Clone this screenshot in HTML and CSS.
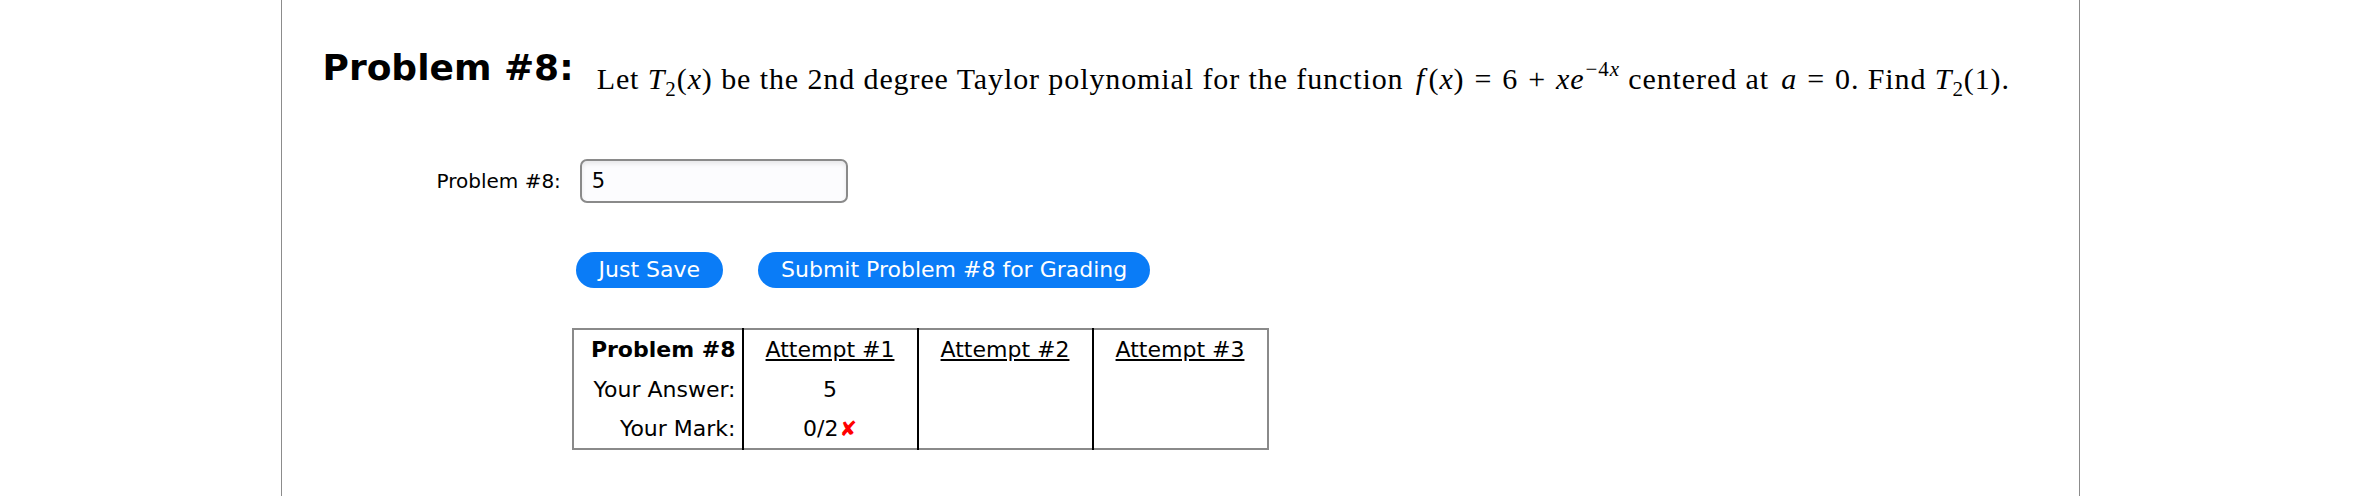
FILE: index.html
```html
<!DOCTYPE html>
<html lang="en">
<head>
<meta charset="utf-8">
<title>Problem #8</title>
<link rel="stylesheet" href="styles.css">
</head>
<body>
<div class="page">
  <div class="question">
    <span class="qnum">Problem #8:</span>
    <span class="math">Let <i>T</i><sub>2</sub>(<i>x</i>) be the 2nd degree Taylor polynomial for the function <span class="expr"><i>f</i>&#8202;(<i>x</i>)<span class="op">=</span>6<span class="op">+</span><i>xe</i><sup>&minus;4<i>x</i></sup></span> centered at <span class="expr"><i>a</i><span class="op">=</span>0</span>. Find <i>T</i><sub>2</sub>(1).</span>
  </div>

  <div class="answer-row">
    <label class="answer-label" for="ans">Problem #8:</label>
    <input class="answer-input" id="ans" type="text" value="5">
  </div>

  <div class="buttons">
    <button class="btn">Just Save</button>
    <button class="btn">Submit Problem #8 for Grading</button>
  </div>

  <table class="attempts">
    <tr>
      <th class="rowhead">Problem #8</th>
      <td><a href="#">Attempt #1</a></td>
      <td><a href="#">Attempt #2</a></td>
      <td><a href="#">Attempt #3</a></td>
    </tr>
    <tr>
      <td class="rowhead">Your Answer:</td>
      <td>5</td>
      <td></td>
      <td></td>
    </tr>
    <tr>
      <td class="rowhead">Your Mark:</td>
      <td>0/2<span class="wrong">&#10008;</span></td>
      <td></td>
      <td></td>
    </tr>
  </table>
</div>
</body>
</html>
```

FILE: styles.css
```css
html, body {
  margin: 0;
  padding: 0;
  background: #ffffff;
}

body {
  font-family: Verdana, "DejaVu Sans", sans-serif;
  color: #000;
}

.page {
  box-sizing: border-box;
  width: 1799px;
  min-height: 496px;
  margin: 0 auto;
  border-left: 1px solid #8c8c8c;
  border-right: 1px solid #8c8c8c;
  background: #fff;
  padding: 46px 0 0 41px;
}

.question {
  line-height: 44px;
  white-space: nowrap;
}

.qnum {
  font-size: 36px;
  font-weight: bold;
  margin-right: 18px;
}

.math {
  font-family: "Times New Roman", "Liberation Serif", serif;
  font-size: 30px;
  line-height: 30px;
  vertical-align: -9px;
  letter-spacing: 0.9px;
}

.math sub {
  font-size: 21px;
  vertical-align: -7px;
  line-height: 0;
}

.math sup {
  font-size: 21px;
  vertical-align: 13px;
  line-height: 0;
  margin-left: 1px;
}

.expr {
  margin-left: 4px;
}

.math .op {
  margin: 0 10px;
}

.answer-row {
  display: flex;
  align-items: center;
  margin-top: 62px;
  padding-left: 114px;
}

.answer-label {
  font-size: 20px;
  margin-right: 19px;
}

.answer-input {
  box-sizing: border-box;
  width: 268px;
  height: 44px;
  border: 2px solid #8a8a8a;
  border-radius: 7px;
  padding: 0 10px;
  font-family: Verdana, "DejaVu Sans", sans-serif;
  font-size: 21px;
  color: #000;
  background: #fcfcfe;
  box-shadow: inset 0 3px 4px rgba(0, 0, 0, 0.08);
  outline: none;
}

.buttons {
  display: flex;
  gap: 35px;
  margin-top: 49px;
  padding-left: 253px;
}

.btn {
  height: 36px;
  padding: 0 23px;
  border: none;
  border-radius: 18px;
  background: #0a7cf7;
  color: #fff;
  font-family: Verdana, "DejaVu Sans", sans-serif;
  font-size: 22px;
  line-height: 36px;
}

.attempts {
  margin-top: 40px;
  margin-left: 249px;
  border-collapse: collapse;
  border: 2px solid #8a8a8a;
  font-size: 22px;
}

.attempts th,
.attempts td {
  box-sizing: border-box;
  height: 40px;
  padding: 0 6px;
  text-align: center;
  font-weight: normal;
  border-left: 2px solid #000;
  width: 175px;
}

.attempts .rowhead {
  text-align: right;
  border-left: none;
  width: 170px;
}

.attempts th.rowhead {
  font-weight: bold;
}

.attempts a {
  color: #000;
  text-decoration: underline;
}

.wrong {
  color: #f00;
  font-weight: bold;
  font-size: 21px;
  margin-left: 1px;
}
```
